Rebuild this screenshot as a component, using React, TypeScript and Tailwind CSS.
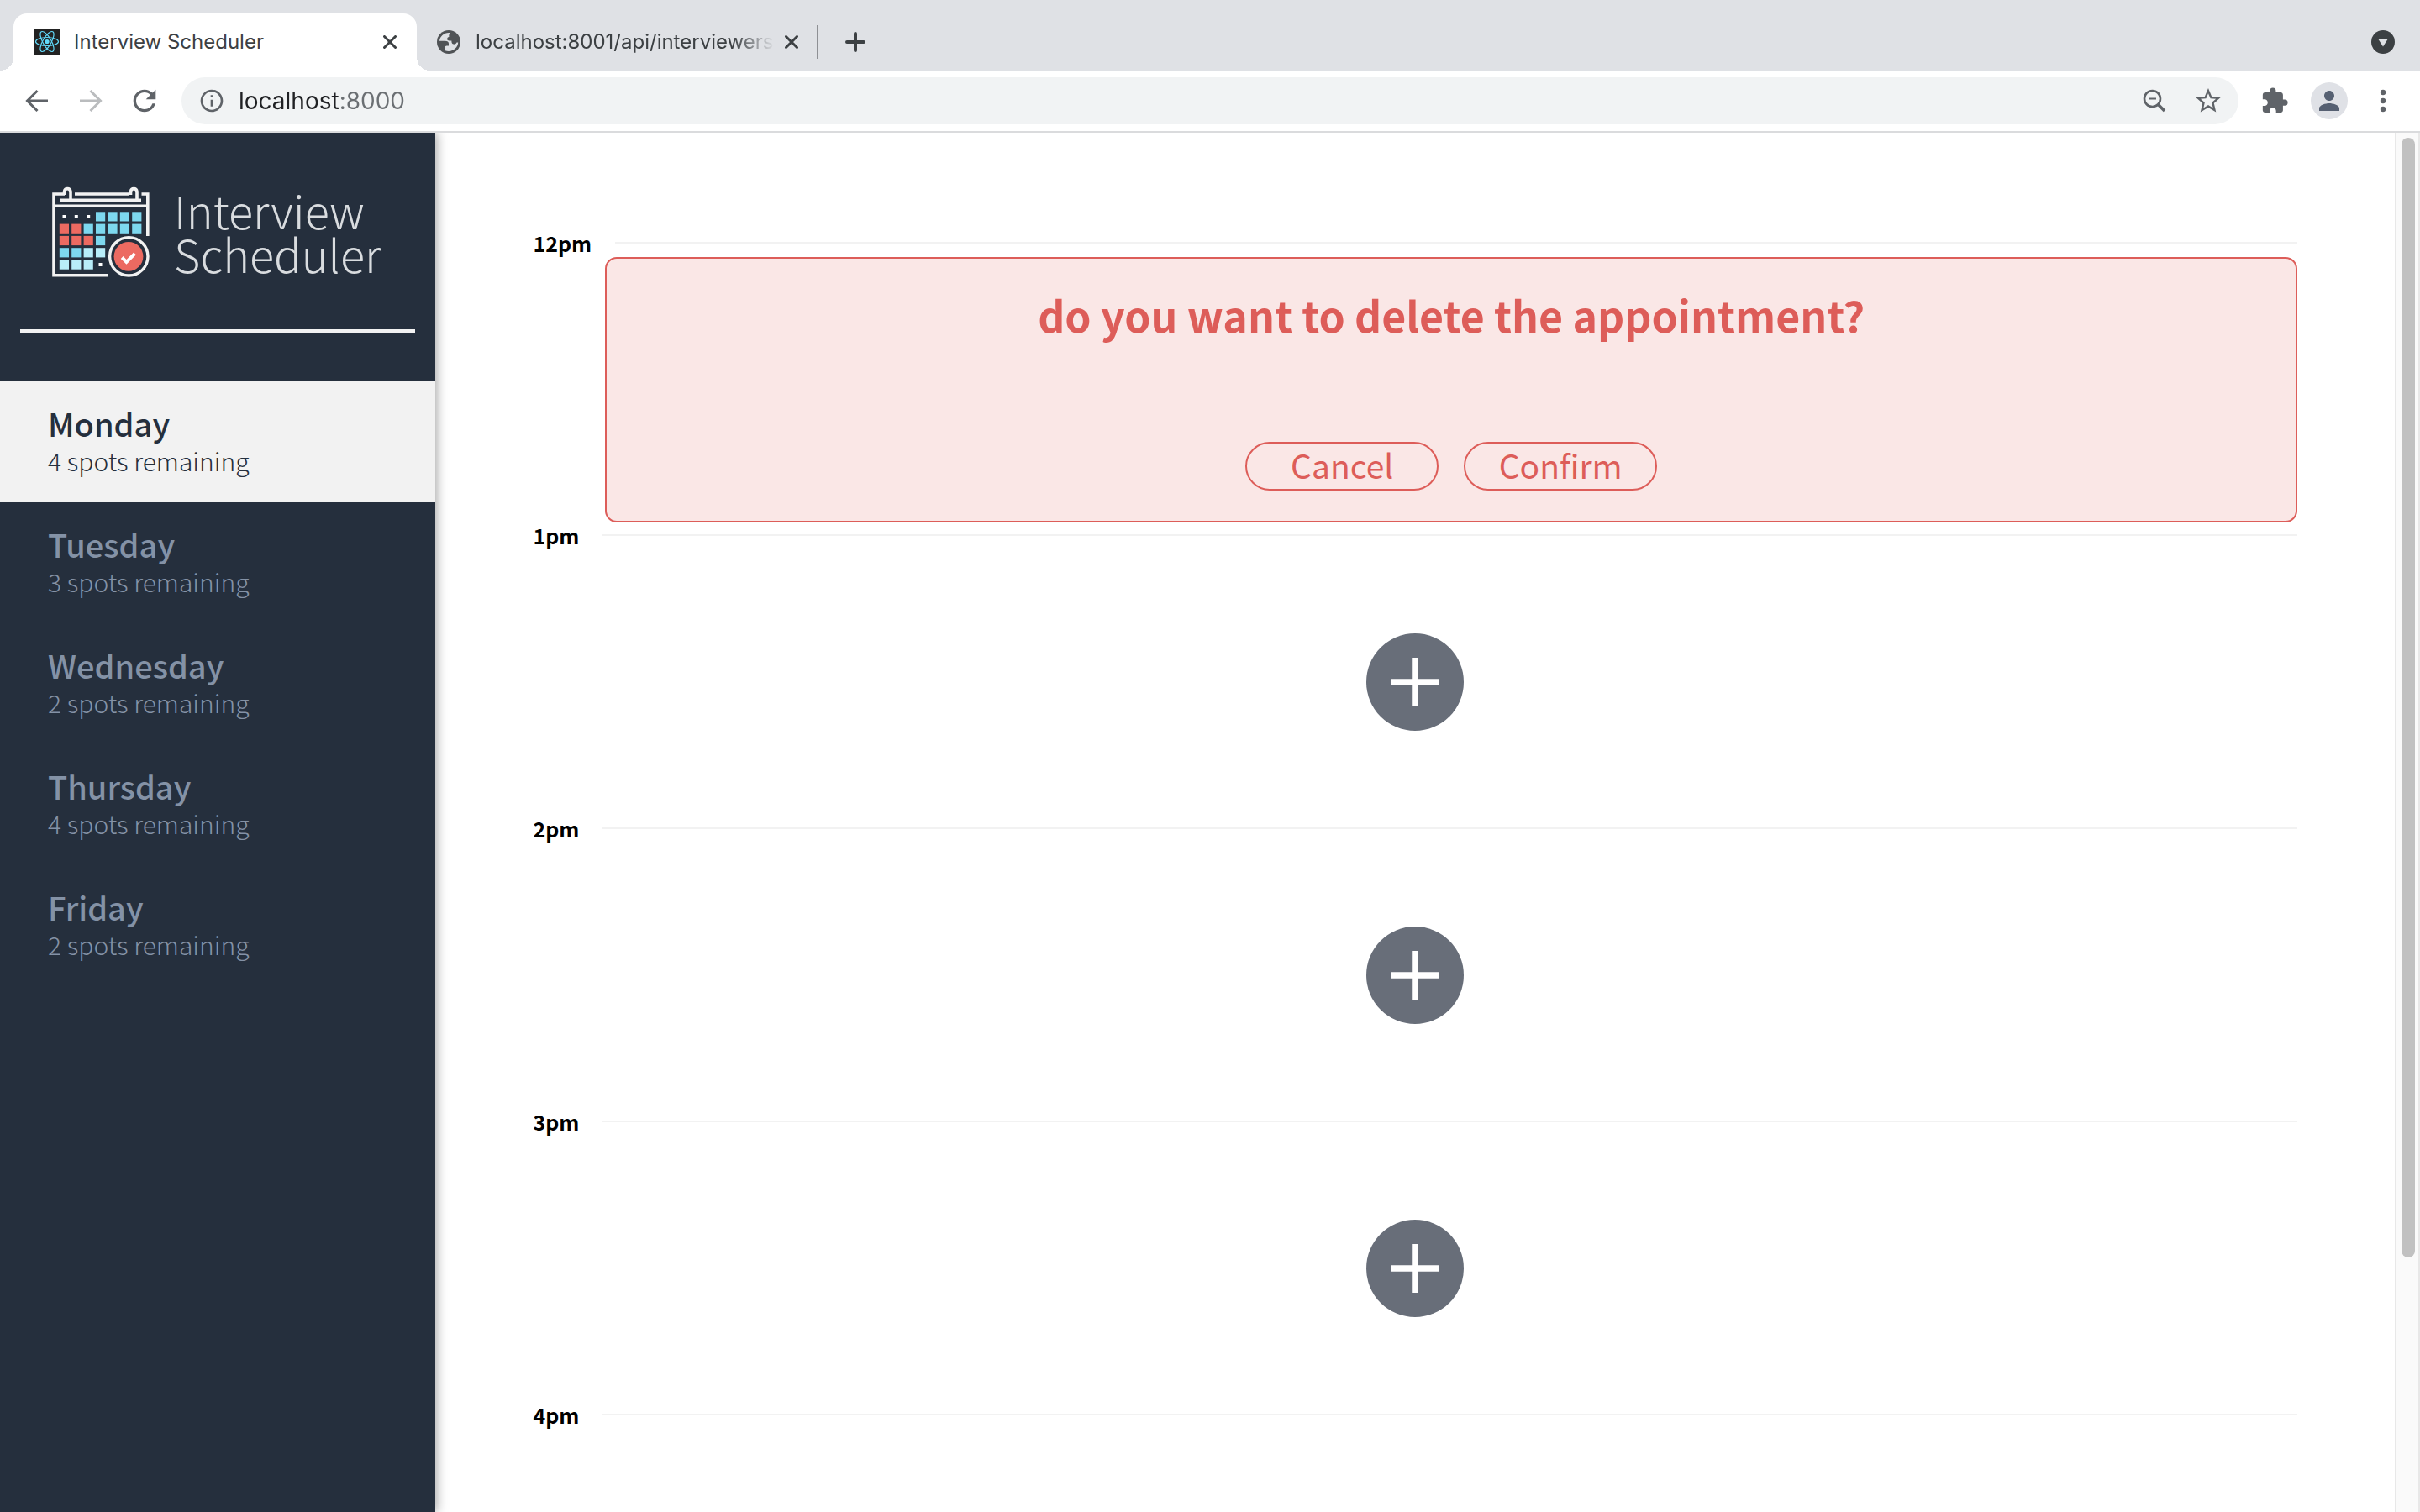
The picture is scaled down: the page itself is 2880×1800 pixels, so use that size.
import { MdExtension, MdInfoOutline, MdPerson, MdRefresh, MdStarBorder } from "react-icons/md";

const days = [
  { name: "Monday", spots: 4 },
  { name: "Tuesday", spots: 3 },
  { name: "Wednesday", spots: 2 },
  { name: "Thursday", spots: 4 },
  { name: "Friday", spots: 2 },
];

function ReactFavicon() {
  return (
    <svg className="size-8 shrink-0" viewBox="0 0 32 32" aria-hidden="true">
      <rect width="32" height="32" rx="3" fill="#222" />
      <g fill="none" stroke="#61dafb" strokeWidth="1.2">
        <ellipse cx="16" cy="15.5" rx="13.5" ry="5" />
        <ellipse cx="16" cy="15.5" rx="13.5" ry="5" transform="rotate(60 16 15.5)" />
        <ellipse cx="16" cy="15.5" rx="13.5" ry="5" transform="rotate(120 16 15.5)" />
      </g>
      <circle cx="16" cy="15.5" r="2.6" fill="#61dafb" />
    </svg>
  );
}

function Globe() {
  return (
    <svg className="size-7 shrink-0" viewBox="0 0 28 28" aria-hidden="true">
      <circle cx="14" cy="14" r="14" fill="#505356" />
      <path
        d="M15.5 3 C9 2.2 3.4 7 3 12.8 H9.5 C12.5 12.8 14 14 14 16 V18.5 H11.5 C10.3 18.5 9.8 19.2 9.8 20.3 V24.2 C17.5 27 25 21.5 25.2 14.6 L23.5 14.6 C22.8 16.3 21.2 17 19.5 16.5 C17.6 16 17.4 14.8 17.4 12.6 C14.5 12.6 12.2 12.4 12.2 10.4 C12.2 8.8 13 8.2 14.4 8 C14.2 6 14.4 4.2 15.5 3 Z"
        fill="#dfe1e5"
      />
    </svg>
  );
}

function Close() {
  return (
    <svg className="size-4" viewBox="0 0 16 16" fill="none" stroke="#3c4043" strokeWidth="3" strokeLinecap="round" aria-hidden="true">
      <path d="M1.5 1.5 14.5 14.5 M14.5 1.5 1.5 14.5" />
    </svg>
  );
}

function TabStrip() {
  return (
    <div className="flex h-[84px] items-end bg-[#dfe1e5] pl-4 pr-[30px] text-[24px] text-[#3c4043]">
      <div className="relative flex h-[68px] w-[480px] items-center gap-4 rounded-t-2xl bg-white px-6 before:absolute before:bottom-0 before:-left-4 before:size-4 before:bg-[radial-gradient(circle_at_0_0,#dfe1e5_16px,#fff_16px)] after:absolute after:bottom-0 after:-right-4 after:size-4 after:bg-[radial-gradient(circle_at_100%_0,#dfe1e5_16px,#fff_16px)]">
        <ReactFavicon />
        <span className="flex-1 truncate">Interview Scheduler</span>
        <button type="button" aria-label="Close Interview Scheduler tab">
          <Close />
        </button>
      </div>
      <div className="flex h-[68px] w-[476px] items-center pl-6 pr-[22px]">
        <Globe />
        <span className="ml-[18px] mr-3 flex-1 overflow-hidden whitespace-nowrap [mask-image:linear-gradient(to_right,#000_86%,transparent)]">
          localhost:8001/api/interviewers
        </span>
        <button type="button" aria-label="Close localhost tab">
          <Close />
        </button>
      </div>
      <div className="flex h-[68px] flex-1 items-center">
        <div className="h-10 w-0.5 bg-[#8e9094]" />
        <button type="button" aria-label="New tab" className="ml-8">
          <svg className="size-6" viewBox="0 0 24 24" stroke="#3c4043" strokeWidth="4" strokeLinecap="round" aria-hidden="true">
            <path d="M12 2 V22 M2 12 H22" />
          </svg>
        </button>
        <button type="button" aria-label="Search tabs" className="ml-auto">
          <svg className="size-7" viewBox="0 0 28 28" aria-hidden="true">
            <circle cx="14" cy="14" r="14" fill="#3c4043" />
            <path d="M8 10 H20 L14 19.5 Z" fill="#dfe1e5" />
          </svg>
        </button>
      </div>
    </div>
  );
}

function Toolbar() {
  return (
    <div className="relative z-20 flex h-[74px] items-center border-b-2 border-[#dadbdd] bg-white px-[30px] text-[#5f6368]">
      <div className="flex items-center gap-9">
        <button type="button" aria-label="Back">
          <svg className="size-7" viewBox="0 0 28 28" fill="none" stroke="#5f6368" strokeWidth="3" aria-hidden="true">
            <path d="M27 14 H3 M14.5 2 2.5 14 14.5 26" />
          </svg>
        </button>
        <button type="button" aria-label="Forward">
          <svg className="size-7" viewBox="0 0 28 28" fill="none" stroke="#babcbe" strokeWidth="3" aria-hidden="true">
            <path d="M1 14 H25 M13.5 2 25.5 14 13.5 26" />
          </svg>
        </button>
        <button type="button" aria-label="Reload" className="-mx-1.5">
          <MdRefresh className="size-10" />
        </button>
      </div>
      <div className="ml-[30px] flex h-14 flex-1 items-center rounded-full bg-[#f1f3f4] pl-5 pr-[18px]">
        <button type="button" aria-label="Site information">
          <MdInfoOutline className="size-8" />
        </button>
        <input
          aria-label="Address"
          defaultValue="localhost:8000"
          className="ml-4 min-w-0 flex-1 bg-[linear-gradient(to_right,#202124_120px,#6b6f73_120px)] bg-clip-text text-[28px] text-transparent outline-none"
        />
        <button type="button" aria-label="Zoom" className="mr-8">
          <svg className="size-7" viewBox="0 0 28 28" fill="none" stroke="#5f6368" aria-hidden="true">
            <circle cx="11.5" cy="11.5" r="9.5" strokeWidth="2.6" />
            <path d="M7 11.5 H16" strokeWidth="2" />
            <path d="M18.5 18.5 26 26" strokeWidth="3.6" />
          </svg>
        </button>
        <button type="button" aria-label="Bookmark this page">
          <MdStarBorder className="size-9" />
        </button>
      </div>
      <button type="button" aria-label="Extensions" className="ml-[26px]">
        <MdExtension className="size-[34px]" />
      </button>
      <button type="button" aria-label="Profile" className="ml-[26px] flex size-11 items-center justify-center rounded-full bg-[#dfe1e6] text-[#566072]">
        <MdPerson className="size-9" />
      </button>
      <button type="button" aria-label="Menu" className="ml-7">
        <svg className="size-7" viewBox="0 0 28 28" fill="#5f6368" aria-hidden="true">
          <circle cx="14" cy="4" r="3.2" />
          <circle cx="14" cy="14" r="3.2" />
          <circle cx="14" cy="24" r="3.2" />
        </svg>
      </button>
    </div>
  );
}

const cellRows = ["   bbbb", "rrbbbbb", "rrrb", "bbll", "lll"];
const cellFill: Record<string, string> = { b: "#7dd8ef", r: "#ec6a61", l: "#b8edf9" };

function CalendarLogo() {
  return (
    <svg className="h-[108px] w-[116px] shrink-0" viewBox="0 0 116 108" fill="none" aria-hidden="true">
      <g stroke="#f2f2f2" strokeWidth="3.6">
        <path d="M15 9 H2 V105.8 H67" />
        <path d="M106.5 9 H113.8 V59" />
        <path d="M27 9 H92" />
        <path d="M9 16.3 H106" />
        <path d="M2 23.3 H114" />
        <path d="M14.5 10 V6 A3.8 4 0 0 1 22 6 V16" />
        <path d="M93.5 10 V6 A3.8 4 0 0 1 101 6 V16" />
      </g>
      {cellRows.map((row, r) =>
        row.split("").map((c, i) =>
          c === " " ? null : (
            <rect key={`${r}-${i}`} x={8.8 + i * 14.4} y={30.3 + r * 14.3} width="11.2" height="11.2" fill={cellFill[c]} />
          ),
        ),
      )}
      <g fill="#fff">
        <rect x="12.5" y="34" width="4" height="4" />
        <rect x="26.8" y="34" width="4" height="4" />
        <rect x="41.2" y="34" width="4" height="4" />
        <rect x="55.5" y="91" width="4" height="4" />
      </g>
      <circle cx="91.3" cy="83.3" r="22.7" stroke="#f2f2f2" strokeWidth="3.4" />
      <circle cx="91" cy="83.3" r="17.4" fill="#ec6a61" />
      <path d="M83.2 84.5 88.5 89.8 98.5 79.8" stroke="#fff" strokeWidth="4" />
    </svg>
  );
}

function Sidebar() {
  return (
    <aside className="relative z-10 w-[18%] shrink-0 bg-[#252f3d] shadow-[2px_0_12px_rgba(0,0,0,0.35)]">
      <div className="flex items-center gap-[29px] pl-[62px] pt-16">
        <CalendarLogo />
        <h1 className="text-[54px] font-extralight leading-[52px] text-[#d9dcdf]">
          Interview
          <br />
          Scheduler
        </h1>
      </div>
      <hr className="mx-6 mt-[62px] h-1 border-0 bg-[#f2f2f2]" />
      <nav className="mt-[58px]" aria-label="Days">
        <ul>
          {days.map((day) => (
            <li key={day.name}>
              <button
                type="button"
                aria-pressed={day.name === "Monday"}
                className="block h-36 w-full pl-[57px] text-left text-[#8492a6] aria-pressed:bg-[#f2f2f2] aria-pressed:text-[#252f3d]"
              >
                <span className="block text-[38px] font-medium leading-[44px]">{day.name}</span>
                <span className="block text-[30px] font-light leading-[44px]">{day.spots} spots remaining</span>
              </button>
            </li>
          ))}
        </ul>
      </nav>
    </aside>
  );
}

function HourHeader({ time }: { time: string }) {
  return (
    <header className="flex h-6 items-center gap-7">
      <h2 className="text-[25px] font-bold leading-6 text-black">{time}</h2>
      <div className="h-0.5 flex-1 bg-[#f2f2f2]" />
    </header>
  );
}

function DeletePrompt() {
  const buttonClass = "h-[58px] w-[230px] rounded-full border-2 border-[#dd5d59] pb-1 text-[39px] leading-none";
  return (
    <section className="ml-[86px] mt-[5px] flex h-[316px] flex-col items-center justify-between rounded-[14px] border-2 border-[#dd5d59] bg-[#fae7e6] py-9 text-[#dd5d59]">
      <p className="text-[50px] font-bold leading-[60px]">do you want to delete the appointment?</p>
      <div className="flex gap-[30px]">
        <button type="button" className={buttonClass}>
          Cancel
        </button>
        <button type="button" className={buttonClass}>
          Confirm
        </button>
      </div>
    </section>
  );
}

function EmptySlot() {
  return (
    <div className="mt-[5px] flex h-[316px] items-center justify-center">
      <button type="button" aria-label="Add appointment" className="rounded-full">
        <svg className="size-[116px]" viewBox="0 0 116 116" aria-hidden="true">
          <circle cx="58" cy="58" r="58" fill="#686e79" />
          <path d="M58 29 V87 M29 58 H87" stroke="#fff" strokeWidth="7.5" />
        </svg>
      </button>
    </div>
  );
}

export default function App() {
  return (
    <div className="flex h-screen flex-col overflow-hidden bg-white [font-family:Inter,sans-serif]">
      <TabStrip />
      <Toolbar />
      <div className="flex min-h-0 flex-1 [font-family:'Noto_Sans_CJK_SC',sans-serif]">
        <Sidebar />
        <main className="min-w-0 flex-1 overflow-hidden">
          <div className="px-[116px] pt-[119px]">
            <article className="pb-[3px]">
              <HourHeader time="12pm" />
              <DeletePrompt />
            </article>
            {["1pm", "2pm", "3pm"].map((time) => (
              <article key={time} className="pb-1">
                <HourHeader time={time} />
                <EmptySlot />
              </article>
            ))}
            <article>
              <HourHeader time="4pm" />
            </article>
          </div>
        </main>
        <div className="w-[30px] shrink-0 border-x-2 border-[#e8e8e8] bg-[#fafafa] pl-1.5 pt-1.5" aria-hidden="true">
          <div className="h-[81.5%] w-4 rounded-full bg-[#c1c1c1]" />
        </div>
      </div>
    </div>
  );
}
